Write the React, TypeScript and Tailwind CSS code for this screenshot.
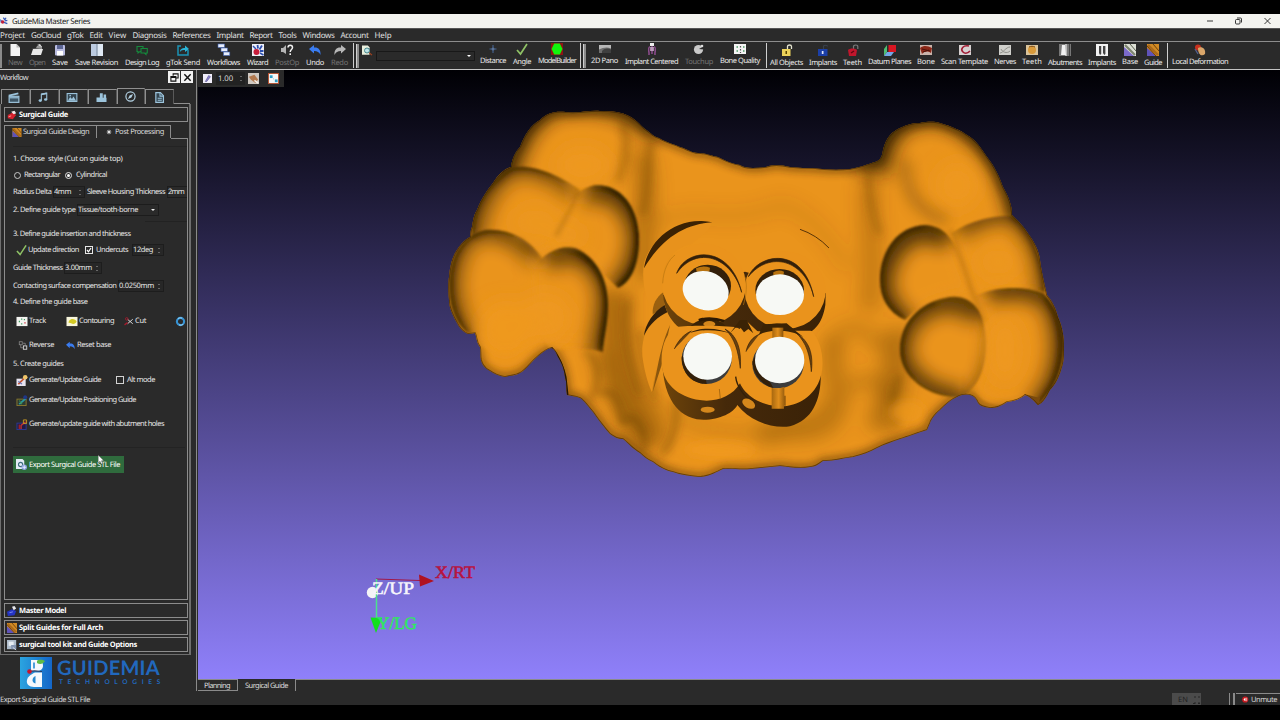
import { useLayoutEffect, useRef, useState, type ReactNode } from "react";

/* Single-line label whose tracking is adjusted so that it fills a given width. */
function Fit({ w, t, className = "" }: { w: number; t: string; className?: string }) {
  const ref = useRef<HTMLSpanElement>(null);
  const [ls, setLs] = useState(0);
  useLayoutEffect(() => {
    if (!ref.current) return;
    const natural = ref.current.getBoundingClientRect().width;
    setLs((w - natural) / t.length);
  }, [w, t]);
  return (
    <span ref={ref} style={{ letterSpacing: ls }} className={"inline-block shrink-0 whitespace-pre " + className}>
      {t}
    </span>
  );
}

/* ---------- small icons, all on a 12x12 grid ---------- */
const icons: Record<string, ReactNode> = {
  app: (<><path d="M5 1l2 3M9 1L7 5M11 5L7 6" stroke="#3458b8" strokeWidth="1.8" /><path d="M0 3l4 3-3 3z" fill="#4a6cc8" /><circle cx="4" cy="7.5" r="2.6" fill="#c0203a" /><path d="M6 8l5 2" stroke="#3458b8" strokeWidth="1.8" /></>),
  new: (<><path d="M1.5 0h6l3.500 3.500V12h-9.500z" fill="#f2f2f2" /><path d="M7.500 0v3.500H11z" fill="#b9b9b9" /></>),
  open: (<><path d="M0 4h5l1-2h5v3z" fill="#999" /><path d="M0 11L2 5h10l-2 6z" fill="#e9e9e9" /><path d="M6 1l3-1 2 3" fill="#ddd" /></>),
  save: (<><rect x="1" y="1" width="10" height="10.500" rx="1" fill="#b9bce0" /><rect x="3" y="1" width="6" height="4" fill="#5d6694" /><rect x="3" y="7" width="6" height="4.500" fill="#fff" /></>),
  rev: (<><rect x="0" y="0" width="12" height="12" fill="#dfe9f4" /><rect x="0" y="0" width="5.600" height="12" fill="#bccbe0" /><path d="M6 0v12" stroke="#51647f" strokeWidth=".8" /></>),
  log: (<><path d="M1 2.500h6v5H4l-2 1.500V7.500H1z" fill="none" stroke="#158a3c" strokeWidth="1.100" /><path d="M5 4.500h6.300v4.500H10v1.500L8.500 9H5z" fill="#26302a" stroke="#158a3c" strokeWidth="1.100" /></>),
  send: (<><path d="M4 2H1v9h10V6" fill="none" stroke="#1b93b5" strokeWidth="1.500" /><path d="M3 8c0-3 2-4 5-4V1.500L12 5 8 8V6C6 6 4 6 3 8z" fill="#2bb3d6" /></>),
  flow: (<><rect x="0" y="0" width="6.500" height="3.500" fill="#e8eefb" stroke="#3e62b4" strokeWidth=".6" /><rect x="3" y="4" width="6.500" height="3.500" fill="#e8eefb" stroke="#3e62b4" strokeWidth=".6" /><rect x="5.500" y="8" width="6.300" height="3.500" fill="#e8eefb" stroke="#3e62b4" strokeWidth=".6" /></>),
  wiz: (<><rect width="12" height="12" fill="#eef0f8" /><path d="M5.500 1l.5 3.500M10 1.500L7.500 5.500M11.500 7H8" stroke="#2d4fb0" strokeWidth="1.800" /><path d="M1 2l3 3" stroke="#2d4fb0" strokeWidth="1.500" /><circle cx="4.500" cy="8" r="3" fill="#c81e3c" /><path d="M8 9l3.500 2" stroke="#2d4fb0" strokeWidth="1.600" /></>),
  post: (<><path d="M0 4h2l3-3v9L2 8H0z" fill="#b5b5b5" /><path d="M7 3.500C7 .5 11.500.5 11.500 3.500c0 2-2.300 2-2.300 4.500" fill="none" stroke="#f0f0f0" strokeWidth="1.500" /><rect x="8.400" y="9.300" width="1.600" height="1.700" fill="#f0f0f0" /></>),
  undo: (<path d="M0 5l5-4v2.500c4-.5 7 2 6.500 7.500C10 8 8.500 7 5 7v2.500z" fill="#3a7cf0" />),
  redo: (<path d="M12 5L7 1v2.500C3 3 0 5.500.5 11 2 8 3.500 7 7 7v2.500z" fill="#b7b7b7" />),
  find: (<><path d="M0 0h7l2 2v9H0z" fill="#e8eedc" /><circle cx="6" cy="6" r="3" fill="#bfe3e6" stroke="#3a7f86" strokeWidth="1.100" /><path d="M8.500 8.500L12 11.500" stroke="#a5421f" strokeWidth="1.400" /></>),
  dist: (<><path d="M6 2v8M2.500 6h7" stroke="#3c5272" strokeWidth="1.600" /><circle cx="6" cy="6" r="1.500" fill="#5b7396" /></>),
  check: (<path d="M1 7l3.500 4L11 1" fill="none" stroke="#8fc266" strokeWidth="1.700" />),
  model: (<><rect width="12" height="12" fill="#8f1414" /><path d="M3.200 .6h5.600L11.500 6 8.800 11.400H3.200L.5 6z" fill="#12f50c" /></>),
  pano: (<><rect y="2" width="12" height="8" fill="#6e6e6e" /><path d="M0 2h12v3.500C8 3.500 4 4.500 0 6.500z" fill="#b9b9b9" /><path d="M3 8c3-3 6-3 9-1.500V10H3z" fill="#3f3f3f" /></>),
  impc: (<><path d="M4 0h4v3H4z" fill="#eee" /><path d="M3.500 3.500C1.500 6 3.500 8 3 12M8.500 3.500C10.500 6 8.500 8 9 12M6 3v8" fill="none" stroke="#b55ab5" strokeWidth="1.100" /><path d="M4 4h4v4H4z" fill="#d8b9d8" opacity=".7" /></>),
  touch: (<><circle cx="5.500" cy="6.500" r="4.600" fill="#c9c9c9" /><path d="M6 6l5-3v3.500z" fill="#2a2a2a" /><circle cx="9" cy="3" r="1.300" fill="#ddd" /></>),
  bq: (<><rect y="1" width="12" height="10" fill="#f4f4f4" /><path d="M2.500 4h1.500M2.500 8h1.500M9 4h1.500M9 8h1.500" stroke="#4c9a66" strokeWidth="1.300" /><path d="M6.500 3v1.500M6.500 6v1.500M6.500 9v1" stroke="#555" strokeWidth="1.200" /></>),
  lockY: (<><path d="M6.500 5V2.500C6.500.5 10.500.5 10.500 2.500V5" fill="none" stroke="#e4e4d0" strokeWidth="1.300" /><rect x="1" y="5" width="8.500" height="7" fill="#ecd25a" /><rect x="4.500" y="7" width="1.500" height="3" fill="#594400" /></>),
  lockB: (<><path d="M6.500 5V2.500C6.500.8 10.500.8 10.500 2.500" fill="none" stroke="#38404c" strokeWidth="1.200" /><rect x="1" y="5" width="9.500" height="7" fill="#1b3fa8" /><rect x="4.800" y="7" width="1.700" height="3" fill="#dfe6fa" /></>),
  lockR: (<><path d="M6.500 5V2.500C6.500.5 10.800.5 10.800 2.500V5" fill="none" stroke="#787878" strokeWidth="1.200" /><path d="M1 6c2-2 7-2 9 0l-1 6H2z" fill="#c0162c" /><path d="M4 9l3-2" stroke="#5f0612" strokeWidth="1.300" /></>),
  datum: (<><path d="M0 5l3-4v7l-3 4z" fill="#4fbf74" /><path d="M0 12l3-4h7l-3 4z" fill="#74a7e6" /><path d="M4.500 1H12v7H4.500z" fill="#d91622" /></>),
  bone: (<><rect y="1" width="12" height="10" fill="#c9b3aa" /><path d="M0 4c4-3 8-2 12 0l-1 5c-3-2-6-2-9 1z" fill="#8c2818" /><path d="M2 5l8 2M3 8l6-2" stroke="#4d120a" /></>),
  scan: (<><rect y="1" width="12" height="10" fill="#d6d0d0" /><path d="M10 2C4 1 1 5 4 8c2 2 5 1 7-1" fill="none" stroke="#a11c33" strokeWidth="1.600" /></>),
  nerve: (<><rect y="1" width="12" height="10" fill="#cfcfcb" /><path d="M1 9c3 0 6-6 10-6M2 5c1 3 6 5 9 2" fill="none" stroke="#8f8f8a" /></>),
  tooth: (<><rect y="1" width="12" height="10" fill="#d9c39b" /><circle cx="6" cy="6" r="4" fill="#d99a3a" /><path d="M3 3c2-1 4-1 6 0" stroke="#7c4b14" fill="none" /></>),
  abut: (<><rect width="12" height="12" fill="#777" /><rect x="6" width="2" height="12" fill="#b9b9b9" /><path d="M3 1h3l1 10H2z" fill="#f1f1f1" /><rect x="10" width="1" height="12" fill="#444" /></>),
  imps: (<><rect width="12" height="12" fill="#f2f2f2" /><path d="M3 2h2.200v8L4 11 3 9zM7 2h2.400v8L8.300 11 7 9z" fill="#444" /></>),
  base: (<><rect width="12" height="12" fill="#dcdfd4" /><path d="M0 3v9h10z" fill="#7b6ac9" /><path d="M1 1l10 10" stroke="#7d8470" strokeWidth="2.200" /><path d="M6 0l6 7" stroke="#59604d" strokeWidth="1" /></>),
  guide: (<><rect width="12" height="12" fill="#d08a24" /><path d="M0 4v8h9z" fill="#5f52b8" /><path d="M1 1l10 10" stroke="#a9681a" strokeWidth="2.400" /><path d="M6 0l6 7M0 2l9 10" stroke="#6b3d08" strokeWidth="1" /></>),
  local: (<><circle cx="4" cy="3.500" r="3" fill="#c8311e" /><path d="M4 4c4-2 8 1 7 6-3 3-7 1-7-6z" fill="#d9a66a" /><path d="M1 5l3 5" stroke="#54618f" strokeWidth="1.300" /></>),
  pen: (<><rect width="12" height="12" fill="#f1eefb" /><path d="M3 10l4.500-8 2.500 1.500L5 10z" fill="#8d83cf" stroke="#3b3a74" strokeWidth=".6" /></>),
  hand: (<><rect width="12" height="12" fill="#cfc8c1" /><path d="M1 4l6-2 4 5-3 4-5-4z" fill="#b37a4f" /><path d="M7 8l4 3" stroke="#f5efe9" strokeWidth="1.500" /></>),
  pts: (<><rect x=".5" y=".5" width="11" height="11" fill="#f6f6f6" stroke="#b7502e" /><rect x="2" y="2.500" width="3" height="3" fill="#2c9fc8" /><rect x="7.500" y="7" width="3" height="3" fill="#2c9fc8" /><path d="M5.500 6l1 .8" stroke="#8fc4d8" /></>),
  red: (<><path d="M1 6l6-3 4 3-4 5-6-1z" fill="#d5202c" /><path d="M5 2l4-1 2 3-3 1z" fill="#f2e6e6" /><path d="M2 8l3-1" stroke="#ffb3b3" /></>),
  blue: (<><path d="M0 7l6-3 5 2-2 5-8 1z" fill="#2434c4" /><path d="M6 1l3-1 2 3-3 2z" fill="#e8e8ee" /><path d="M3 8l4-1" stroke="#8f9bf2" /></>),
  kit: (<><rect width="11" height="11" fill="#aebccb" /><rect x="2" y="2" width="6" height="5" fill="#e6edf4" /><path d="M5 6h6v5H5z" fill="#8496b4" /><path d="M7 9l4 3" stroke="#e8edf4" /></>),
  flower: (<path d="M6 1.500v9M1.500 6h9M3 3l6 6M9 3L3 9" stroke="#ededed" strokeWidth="1.700" />),
  track: (<><rect y="1" width="12" height="10" fill="#f4f4f0" /><path d="M2.500 6h1.300M5 3.500h1.300M5 8.500h1.300M8 4h1.300" stroke="#3d9c60" strokeWidth="1.400" /><path d="M8.500 7.500h1.500" stroke="#c34" strokeWidth="1.300" /></>),
  cont: (<><rect y="1" width="12" height="10" fill="#f8f6dc" /><path d="M3 5c2-3 7-2 8 1-1 3-4 3-6 2L2 7z" fill="#d3c924" /></>),
  cut: (<><path d="M4 3l7 6M4 9l7-6" stroke="#d8d8d8" strokeWidth="1.300" /><circle cx="3" cy="2.500" r="1.700" fill="none" stroke="#a31a2c" strokeWidth="1.200" /><path d="M0 10.500l4-3" stroke="#a31a2c" strokeWidth="1.800" /></>),
  refresh: (<><circle cx="6" cy="6" r="4.800" fill="none" stroke="#3793d4" strokeWidth="2.800" /><path d="M2.500 2.500C4 1 6 .8 8 1.500M9.500 9.500C8 11 6 11.200 4 10.500" stroke="#9fd8f5" strokeWidth="1.300" /></>),
  reverse: (<><rect x="1" y="1" width="4" height="4" fill="none" stroke="#8c8c8c" /><rect x="6.500" y="6.500" width="4.500" height="4.500" fill="none" stroke="#d8d8d8" strokeWidth="1.200" /><path d="M3 5v4h3M6 3h3v3" fill="none" stroke="#a8a8a8" strokeWidth=".8" /></>),
  gen1: (<><rect y="4" width="10" height="8" fill="#e6e3ee" /><path d="M2 10l8-8" stroke="#c7522c" strokeWidth="1.800" /><circle cx="9.500" cy="2.500" r="2.500" fill="#f0c56a" /><path d="M2 7l4 3" stroke="#5569b9" strokeWidth="1.200" /></>),
  gen2: (<><rect x=".5" y="4.500" width="10" height="7" fill="#2d3c33" stroke="#8a7a2e" /><path d="M3 10l7-6" stroke="#2a9aa0" strokeWidth="2" /><circle cx="9.500" cy="2.500" r="2.200" fill="#1f3788" /><path d="M3 6l3 4" stroke="#3f8a4c" strokeWidth="1.200" /></>),
  gen3: (<><rect x=".5" y="4.500" width="10" height="7" fill="#221a44" stroke="#2d3a96" /><path d="M5 11V7l5-4" stroke="#c03030" strokeWidth="1.500" /><path d="M7.500 1H11v4H7.500z" fill="none" stroke="#c79a24" /><path d="M3 6v5" stroke="#b22" strokeWidth="1.200" /></>),
  exp: (<><path d="M0 0h7l2 2v9H0z" fill="#e4ebf6" /><circle cx="5" cy="6" r="2.300" fill="none" stroke="#3d6e7c" strokeWidth="1.200" /><circle cx="9" cy="9" r="3" fill="#8ca0dc" /><path d="M7 9h4M9 7v4" stroke="#e8eeff" /></>),
  mute: (<><circle cx="5.500" cy="6" r="5.300" fill="#c9191f" /><path d="M3 5l3-2v6L3 7z" fill="#fff" /><path d="M8 3v6" stroke="#fff" /></>),
  tabClap: (<><path d="M0 3l10.500-2.500.5 2L.5 5z" fill="#9cc4dc" /><rect x=".7" y="4.700" width="10.600" height="6.600" fill="#3d5565" stroke="#9cc4dc" strokeWidth="1.300" /><path d="M1 6.300h10" stroke="#9cc4dc" strokeWidth="1.300" /></>),
  tabMusic: (<><path d="M4 9.500V2l6.500-1.200V8" stroke="#9cc4dc" strokeWidth="1.300" /><path d="M4 2.300l6.500-1.200" stroke="#9cc4dc" strokeWidth="2" /><ellipse cx="2.700" cy="9.700" rx="2" ry="1.600" fill="#9cc4dc" /><ellipse cx="9.200" cy="8.400" rx="2" ry="1.600" fill="#9cc4dc" /></>),
  tabImage: (<><rect x=".7" y="1.700" width="10.600" height="8.600" stroke="#9cc4dc" strokeWidth="1.200" fill="#33444f" /><path d="M1.500 9.500l2.500-4 2 2 1.500-2.500 3 4.500z" fill="#9cc4dc" /><circle cx="4" cy="4" r=".9" fill="#9cc4dc" /></>),
  tabTool: (<path d="M0 6.500h4V1.500h3.500V7H8.500V3h3V7H12v5H0z" fill="#9cc4dc" />),
  tabComp: (<><circle cx="6" cy="6" r="5" stroke="#b4d2e4" strokeWidth="1.300" /><path d="M8.800 3.200L7 7 3.200 8.800 5 5z" fill="#b4d2e4" /></>),
  tabDoc: (<><path d="M2 .7h5l3.300 3.300v7.300H2z" stroke="#9cc4dc" strokeWidth="1.300" fill="#33444f" /><path d="M6.500.7V4.500h3.800M4 6.700h4.500M4 9h4.500" stroke="#9cc4dc" strokeWidth="1.100" /></>),
};

function Ic({ n, className }: { n: string; className: string }) {
  return (
    <svg viewBox="0 0 12 12" className={"block shrink-0 overflow-visible " + className} fill="none">
      {icons[n]}
    </svg>
  );
}

type ToolItem = { i: string; t: string; w: number; dim?: boolean; up?: boolean };

function Tool({ i, t, w, dim, up }: ToolItem) {
  return (
    <div className={"flex shrink-0 flex-col items-center " + (dim ? "text-[#747474]" : "text-[#ececec]")}>
      <Ic n={i} className="h-[12px] w-[12px]" />
      <Fit w={w} t={t} className={"h-[10px] leading-[10px] " + (up ? "mt-px" : "mt-[2px]")} />
    </div>
  );
}

const fileTools: ToolItem[] = [
  { i: "new", t: "New", w: 14, dim: true }, { i: "open", t: "Open", w: 16, dim: true }, { i: "save", t: "Save", w: 16 },
  { i: "rev", t: "Save Revision", w: 43 }, { i: "log", t: "Design Log", w: 34 }, { i: "send", t: "gTok Send", w: 34 },
  { i: "flow", t: "Workflows", w: 33 }, { i: "wiz", t: "Wizard", w: 21 }, { i: "post", t: "PostOp", w: 24, dim: true },
  { i: "undo", t: "Undo", w: 18 }, { i: "redo", t: "Redo", w: 17, dim: true },
];
const measureTools: ToolItem[] = [
  { i: "dist", t: "Distance", w: 26, up: true }, { i: "check", t: "Angle", w: 18 }, { i: "model", t: "ModelBuilder", w: 38, up: true },
];
const viewTools: ToolItem[] = [
  { i: "pano", t: "2D Pano", w: 27, up: true }, { i: "impc", t: "Implant Centered", w: 53 },
  { i: "touch", t: "Touchup", w: 28, dim: true }, { i: "bq", t: "Bone Quality", w: 40, up: true },
];
const objectTools: ToolItem[] = [
  { i: "lockY", t: "All Objects", w: 33 }, { i: "lockB", t: "Implants", w: 28 }, { i: "lockR", t: "Teeth", w: 19 },
  { i: "datum", t: "Datum Planes", w: 43, up: true }, { i: "bone", t: "Bone", w: 18, up: true }, { i: "scan", t: "Scan Template", w: 47, up: true },
  { i: "nerve", t: "Nerves", w: 22, up: true }, { i: "tooth", t: "Teeth", w: 20, up: true }, { i: "abut", t: "Abutments", w: 34 },
  { i: "imps", t: "Implants", w: 28 }, { i: "base", t: "Base", w: 16, up: true }, { i: "guide", t: "Guide", w: 18 },
];
const menus: [string, number][] = [
  ["Project", 25], ["GoCloud", 30], ["gTok", 16.5], ["Edit", 13], ["View", 18], ["Diagnosis", 34], ["References", 38],
  ["Implant", 27], ["Report", 23], ["Tools", 18], ["Windows", 32], ["Account", 28], ["Help", 17],
];

const Sep = () => <div className="h-[25px] w-px shrink-0 bg-[#cfcfcf]" />;
const Handle = () => <div className="h-[24px] w-[3px] shrink-0 border-l border-[#d0d0d0] bg-[#8b8b8b]" />;

function Spin() {
  return (
    <span className="flex w-[8px] flex-col items-center gap-[3px]">
      <span className="h-0 w-0 border-x-[1.5px] border-b-[1.5px] border-x-transparent border-b-[#aaa]" />
      <span className="h-0 w-0 border-x-[1.5px] border-t-[1.5px] border-x-transparent border-t-[#aaa]" />
    </span>
  );
}

function Field({ t, w, className }: { t: string; w: number; className: string }) {
  return (
    <span className={"flex h-[12px] shrink-0 items-center justify-between border border-[#1d1d1d] bg-[#272727] leading-[10px] " + className}>
      <Fit t={t} w={w} />
      <Spin />
    </span>
  );
}

function Row({ className, children }: { className: string; children: ReactNode }) {
  return <div className={"flex h-[12px] shrink-0 items-center leading-[12px] " + className}>{children}</div>;
}

function SectionBar({ i, t, w, className }: { i: string; t: string; w: number; className: string }) {
  return (
    <div className={"flex h-[15px] shrink-0 items-center border border-[#8c8c8c] pl-[2px] font-bold text-white " + className}>
      <Ic n={i} className="h-[10px] w-[10px]" />
      <Fit t={t} w={w} className="ml-[2px]" />
    </div>
  );
}

const tabBox = "flex items-center justify-center border-t border-l border-r border-[#8f8f8f] border-r-[#5a5a5a] ";

function Workflow() {
  return (
    <aside className="flex w-[196px] shrink-0 flex-col">
      <div className="flex h-[14px] items-center text-[#dcdcdc]">
        <Fit t="Workflow" w={28} className="mt-px" />
        <div className="mr-[3px] ml-auto flex gap-px">
          <span className="flex h-[12px] w-[12px] items-center justify-center bg-[#f2f2f2]">
            <svg viewBox="0 0 10 10" className="h-[9px] w-[9px]" fill="none" stroke="#111" strokeWidth="1.200"><path d="M3.500 3V1h5.500v4.500H7M1 4h5.500v5H1zM1 5h5.500" /></svg>
          </span>
          <span className="flex h-[12px] w-[12px] items-center justify-center bg-[#f2f2f2]">
            <svg viewBox="0 0 10 10" className="h-[9px] w-[9px]" fill="none" stroke="#111" strokeWidth="1.600"><path d="M1.500 1.500l7 7M8.500 1.500l-7 7" /></svg>
          </span>
        </div>
      </div>

      <div className="mt-[4px] flex h-[16px] items-end pl-px">
        <div className={tabBox + "h-[15px] w-[29px] pr-[3px]"}><Ic n="tabClap" className="h-[11px] w-[12px]" /></div>
        <div className={tabBox + "h-[15px] w-[29px] pr-[3px]"}><Ic n="tabMusic" className="h-[11px] w-[10px]" /></div>
        <div className={tabBox + "h-[15px] w-[29px] pr-[3px]"}><Ic n="tabImage" className="h-[11px] w-[12px]" /></div>
        <div className={tabBox + "h-[15px] w-[29px] pr-[3px]"}><Ic n="tabTool" className="h-[10px] w-[11px]" /></div>
        <div className={tabBox + "h-[16px] w-[28px] pr-[2px]"}><Ic n="tabComp" className="h-[11px] w-[11px]" /></div>
        <div className={tabBox + "h-[15px] w-[29px]"}><Ic n="tabDoc" className="h-[11px] w-[11px]" /></div>
        <div className="h-px w-[16px] self-end bg-[#8f8f8f]" />
      </div>

      <div className="flex h-[551px] w-[191px] shrink-0 flex-col border-r-2 border-b border-l border-[#6e6e6e] pt-[3px] pr-px pl-[3px]">
        <SectionBar i="red" t="Surgical Guide" w={49} className="" />
        <div className="mt-[3px] flex h-[14px] shrink-0 text-[#dadada]">
          <div className="flex h-[14px] w-[92px] items-center border-t border-l border-[#8c8c8c] pb-px pl-[7px]">
            <Ic n="guide" className="h-[9px] w-[10px]" />
            <Fit t="Surgical Guide Design" w={66} className="ml-px" />
          </div>
          <div className="flex h-[13px] w-[75px] items-center border-t border-r border-l border-[#8c8c8c] pl-[9px]">
            <Ic n="flower" className="h-[6px] w-[6px]" />
            <Fit t="Post Processing" w={49} className="ml-[3px]" />
          </div>
          <div className="h-px grow self-end bg-[#8c8c8c]" />
        </div>

        <div className="flex h-[461px] shrink-0 flex-col overflow-hidden border-r border-b border-l border-[#8c8c8c] pl-[8px] text-[#e8e8e8]">
          <div className="mt-[7px] h-px bg-[#232323]" />
          <Row className="mt-[6px]"><Fit t="1. Choose  style (Cut on guide top)" w={109.500} /></Row>
          <Row className="mt-[4px]">
            <span className="ml-px h-[7px] w-[7px] rounded-full border border-[#c9c9c9]" />
            <Fit t="Rectangular" w={36} className="ml-[3px]" />
            <span className="ml-[5px] flex h-[7px] w-[7px] items-center justify-center rounded-full border border-[#e0e0e0]"><span className="h-[3px] w-[3px] rounded-full bg-white" /></span>
            <Fit t="Cylindrical" w={31} className="ml-[4px]" />
          </Row>
          <Row className="mt-[5px]">
            <Fit t="Radius Delta" w={38.500} />
            <Field t="4mm" w={17} className="ml-[1.500px] w-[32px]" />
            <Fit t="Sleeve Housing Thickness" w={78} className="ml-[2px]" />
            <span className="ml-[2px] flex h-[12px] grow items-center border-y border-l border-[#1d1d1d] leading-[10px]"><Fit t="2mm" w={16} /></span>
          </Row>
          <Row className="mt-[6px]">
            <Fit t="2. Define guide type" w={62.500} />
            <span className="ml-[1.500px] flex h-[12px] w-[82px] items-center justify-between border border-[#1c1c1c] leading-[10px]">
              <Fit t="Tissue/tooth-borne" w={60} />
              <span className="mr-[3px] h-0 w-0 border-x-[2.500px] border-t-[2.500px] border-x-transparent border-t-[#ececec]" />
            </span>
          </Row>
          <div className="mt-[5px] ml-auto h-px w-[42px] bg-[#222]" />
          <Row className="mt-[6px]"><Fit t="3. Define guide insertion and thickness" w={117.500} /></Row>
          <Row className="mt-[4px]">
            <Ic n="check" className="ml-[3px] h-[12px] w-[11px]" />
            <Fit t="Update direction" w={51} className="ml-px" />
            <span className="ml-[6px] flex h-[8px] w-[8px] items-center justify-center border border-[#e6e6e6]">
              <svg viewBox="0 0 6 6" className="h-[6px] w-[6px]" fill="none" stroke="#fff" strokeWidth="1.200"><path d="M1 3l1.500 1.800L5 1" /></svg>
            </span>
            <Fit t="Undercuts" w={32} className="ml-[3px]" />
            <Field t="12deg" w={20} className="ml-[4px] w-[32px]" />
          </Row>
          <Row className="mt-[6px]">
            <Fit t="Guide Thickness" w={49.500} />
            <Field t="3.00mm" w={27} className="ml-[1.500px] w-[38px]" />
          </Row>
          <Row className="mt-[6px]">
            <Fit t="Contacting surface compensation" w={103.500} />
            <Field t="0.0250mm" w={35} className="ml-[1.500px] w-[46px]" />
          </Row>
          <Row className="mt-[4px]"><Fit t="4. Define the guide base" w={74.500} /></Row>
          <Row className="mt-[7px]">
            <Ic n="track" className="ml-[3px] h-[11px] w-[12px]" />
            <Fit t="Track" w={17} className="ml-px" />
            <Ic n="cont" className="ml-[20px] h-[11px] w-[12px]" />
            <Fit t="Contouring" w={35} className="ml-px" />
            <Ic n="cut" className="ml-[10px] h-[9px] w-[10px]" />
            <Fit t="Cut" w={11} className="ml-px" />
            <Ic n="refresh" className="ml-[30px] h-[9px] w-[9px]" />
          </Row>
          <Row className="mt-[12px]">
            <Ic n="reverse" className="ml-[5px] h-[9px] w-[10px]" />
            <Fit t="Reverse" w={25} className="ml-px" />
            <Ic n="undo" className="ml-[11px] h-[9px] w-[11px]" />
            <Fit t="Reset base" w={34} className="ml-px" />
          </Row>
          <Row className="mt-[7px]"><Fit t="5. Create guides" w={50.500} /></Row>
          <Row className="mt-[4px]">
            <Ic n="gen1" className="ml-[3px] h-[11px] w-[12px]" />
            <Fit t="Generate/Update Guide" w={72} className="ml-px" />
            <span className="ml-[15px] h-[8px] w-[8px] border border-[#d2d2d2]" />
            <Fit t="Alt mode" w={28} className="ml-[3px]" />
          </Row>
          <Row className="mt-[8px]">
            <Ic n="gen2" className="ml-[3px] h-[11px] w-[12px]" />
            <Fit t="Generate/Update Positioning Guide" w={107} className="ml-px" />
          </Row>
          <Row className="mt-[12px]">
            <Ic n="gen3" className="ml-[3px] h-[11px] w-[12px]" />
            <Fit t="Generate/update guide with abutment holes" w={135} className="ml-px" />
          </Row>
          <div className="mt-[17px] h-px w-[172px] shrink-0 bg-[#232323]" />
          <div className="relative mt-[8px] flex h-[17px] w-[111px] shrink-0 items-center bg-[#2f6b3d] pl-[3px] text-white">
            <Ic n="exp" className="h-[11px] w-[11px]" />
            <Fit t="Export Surgical Guide STL File" w={91} className="ml-[2px]" />
            <svg viewBox="0 0 8 12" className="absolute top-[-1px] left-[85px] h-[10px] w-[7px]"><path d="M0 0v9.500l2.200-2L4 11l1.500-.7L4 7h3z" fill="#fff" stroke="#333" strokeWidth=".5" /></svg>
          </div>
        </div>

        <SectionBar i="blue" t="Master Model" w={47} className="mt-[3px]" />
        <SectionBar i="guide" t="Split Guides for Full Arch" w={84} className="mt-[2px]" />
        <SectionBar i="kit" t="surgical tool kit and Guide Options" w={118} className="mt-[2px]" />
      </div>

      <div className="flex h-[35px] items-center pl-[20px]">
        <svg viewBox="0 0 32 32" className="h-[32px] w-[32px] shrink-0">
          <defs><linearGradient id="lg" x1="0" x2="1"><stop offset="0" stopColor="#2ba4e0" /><stop offset="1" stopColor="#1466c8" /></linearGradient></defs>
          <rect width="32" height="32" fill="url(#lg)" />
          <path d="M11 3h6c5 0 6 3 6 6s-3 5-6 5h-6z" fill="#f4f8fc" />
          <path d="M14 5.500v6" stroke="#2388d0" strokeWidth="1.600" />
          <path d="M22 15.500V30h-8c-5 0-8-3-7-7s5-6 8-7.500z" fill="#f4f8fc" />
          <path d="M15.500 19c-4 1.500-4 7 0 7.500z" fill="#2388d0" />
          <path d="M17 4c2-2 6-1 8 0-2 3-5 4-8 2z" fill="#5dbb46" />
          <path d="M9 15c3-2 8-1 13-.5" fill="none" stroke="#2a3b60" strokeWidth="1.200" />
          <circle cx="9.500" cy="14.500" r="2.300" fill="#c8142c" />
        </svg>
        <div className="ml-[5px] flex flex-col items-start text-[#2168bd]">
          <Fit t="GUIDEMIA" w={103} className="h-[20px] font-[Lato] text-[20px] leading-[20px] font-bold" />
          <Fit t="TECHNOLOGIES" w={106} className="ml-[2px] h-[9px] font-[Lato] text-[6.5px] leading-[9px] font-bold" />
        </div>
      </div>
    </aside>
  );
}

/* ---------- 3D model of the jaw ---------- */
const body =
  "M511 167C512 158 516 151 520 147C525 134 531 125 540 120C548 112 556 111 566 112C578 114 588 110 600 111C612 111 622 112 629 116C638 121 641 126 645 129C651 133 654 137 659 138C667 143 674 144 680 147C687 149 692 153 698 153C706 153 712 156 718 157C728 162 733 164 740 165C746 169 756 168 766 167C774 164 781 165 790 167C800 168 806 168 813 168C827 170 840 170 850 169C862 167 868 164 875 162C881 160 882 156 883 150C886 137 893 131 900 128C908 124 914 123 920 123C930 121 936 122 940 123C953 127 960 130 967 135C976 140 981 148 987 157C995 167 999 176 1003 187C1009 198 1012 205 1012 215C1020 223 1024 227 1027 232C1036 244 1039 252 1040 260C1042 275 1045 285 1047 295C1053 302 1056 309 1058 317C1063 328 1064 338 1064 347C1064 356 1064 361 1062 367C1059 378 1055 385 1050 390C1046 398 1043 403 1038 405C1034 401 1031 397 1025 395C1019 400 1013 401 1007 402C1000 407 995 408 990 408C984 407 980 406 978 403C976 398 974 396 970 395C965 394 960 395 957 397C950 400 945 405 940 410C934 415 931 420 930 423L927 430C917 433 910 436 900 439C892 442 885 444 877 448C870 452 862 455 853 457C843 458 835 461 823 461C819 464 815 467 810 467C799 469 790 467 780 466C770 467 760 468 750 469C740 470 731 468 723 469C716 472 711 476 700 477C690 476 681 475 673 472C664 470 658 466 653 462C648 460 644 457 640 453C633 449 629 444 623 439C618 439 614 437 610 434C604 427 599 421 593 412C589 408 585 401 580 398C575 396 571 396 567 395C566 389 567 383 565 377C564 368 561 362 558 357C556 352 554 348 551 348C546 349 542 353 537 357C531 362 526 370 520 373C515 376 511 375 505 377C499 376 494 374 490 371C484 368 482 364 481 360C480 355 481 351 480 347C476 342 477 337 475 333L468 334C463 332 459 327 457 323C452 314 449 307 449 300C448 290 448 283 449 277C450 266 452 259 455 253C459 246 464 240 470 237C471 234 470 231 472 227C473 220 474 214 477 210C481 199 488 189 493 183C498 175 504 169 511 167Z";

const lobes = {
  b: "M472 237C470 205 488 183 511 168C530 163 560 175 580 190C585 215 570 240 545 250C525 260 490 255 472 237Z",
  c: "M545 247C560 215 570 190 595 185C620 184 637 205 639 235C640 262 632 282 618 288C600 270 580 252 545 247Z",
  d: "M449 285C449 255 462 236 485 230C510 228 530 240 542 258C555 290 560 330 530 350C500 362 480 350 470 334C455 325 449 305 449 285Z",
  e: "M533 268C545 252 560 245 575 248C597 257 608 280 608 305C608 325 603 340 603 352C580 345 560 352 550 349C535 330 530 295 533 268Z",
  g: "M880 280C880 250 898 226 925 225C945 226 955 240 960 262C965 275 970 285 971 292C940 295 920 305 905 320C888 312 880 298 880 280Z",
  h: "M952 233C970 220 995 215 1012 216C1035 233 1043 262 1045 292C1020 288 995 290 975 298C968 275 960 255 952 233Z",
  i: "M900 350C900 322 920 303 945 298C970 292 985 310 987 340C988 365 978 390 960 397C925 398 900 375 900 350Z",
  j: "M975 296C995 286 1025 286 1043 293C1060 310 1065 330 1064 347C1062 378 1050 392 1038 405C1010 405 985 410 975 390C990 365 988 325 975 296Z",
};
type LobeKey = keyof typeof lobes;

const shades: { k: LobeKey; d: string; w: number; o: number; blur: string }[] = [
  { k: "b", d: "M464 250C468 203 484 176 511 160C540 158 562 168 584 188", w: 34, o: 0.6, blur: "url(#b8)" },
  { k: "b", d: "M472 232C474 205 488 183 511 168C530 165 550 172 566 182", w: 6, o: 0.5, blur: "url(#b2)" },
  { k: "c", d: "M578 188C604 176 634 190 645 228C648 258 638 284 616 296", w: 36, o: 0.72, blur: "url(#b8)" },
  { k: "c", d: "M590 185C620 184 637 205 639 235C640 262 632 278 618 288", w: 8, o: 0.9, blur: "url(#b2)" },
  { k: "d", d: "M466 344C436 315 436 250 470 226C500 218 528 232 544 256", w: 34, o: 0.6, blur: "url(#b8)" },
  { k: "d", d: "M468 334C449 315 444 262 466 240C480 229 500 228 515 234", w: 6, o: 0.5, blur: "url(#b2)" },
  { k: "e", d: "M540 258C562 234 604 244 615 290C616 320 609 335 607 358", w: 36, o: 0.72, blur: "url(#b8)" },
  { k: "e", d: "M558 247C595 250 608 280 608 305C608 322 603 335 603 350", w: 8, o: 0.85, blur: "url(#b2)" },
  { k: "g", d: "M954 236C925 208 880 230 874 280C873 304 888 322 905 332", w: 38, o: 0.78, blur: "url(#b8)" },
  { k: "g", d: "M925 225C898 226 880 250 880 280C880 298 888 310 903 320", w: 7, o: 0.55, blur: "url(#b2)" },
  { k: "h", d: "M953 227C970 212 995 207 1014 207C1044 230 1052 265 1053 300", w: 32, o: 0.6, blur: "url(#b8)" },
  { k: "h", d: "M1012 216C1035 233 1043 262 1046 292", w: 6, o: 0.5, blur: "url(#b2)" },
  { k: "i", d: "M986 312C962 280 896 292 892 350C893 380 925 406 964 406", w: 38, o: 0.7, blur: "url(#b8)" },
  { k: "i", d: "M935 301C910 310 900 330 900 350C900 362 904 372 910 380", w: 7, o: 0.5, blur: "url(#b2)" },
  { k: "i", d: "M982 302C998 325 996 365 970 401", w: 18, o: 0.36, blur: "url(#b6)" },
  { k: "j", d: "M986 287C1012 277 1039 282 1056 296C1076 330 1074 384 1040 414", w: 36, o: 0.72, blur: "url(#b8)" },
  { k: "j", d: "M1046 296C1066 328 1068 370 1040 405", w: 7, o: 0.55, blur: "url(#b2)" },
];

function Jaw() {
  return (
    <svg viewBox="198 70 1082 609" className="block h-[609px] w-[1082px]" fill="none">
      <defs>
        <clipPath id="bodyClip"><path d={body} /></clipPath>
        {Object.entries(lobes).map(([k, d]) => (
          <clipPath id={"lobe-" + k} key={k}><path d={d} /></clipPath>
        ))}
        <filter id="b2" x="-30%" y="-30%" width="160%" height="160%"><feGaussianBlur stdDeviation="2.500" /></filter>
        <filter id="b4" x="-40%" y="-40%" width="180%" height="180%"><feGaussianBlur stdDeviation="4" /></filter>
        <filter id="b6" x="-40%" y="-40%" width="180%" height="180%"><feGaussianBlur stdDeviation="6.500" /></filter>
        <filter id="b8" x="-60%" y="-60%" width="220%" height="220%"><feGaussianBlur stdDeviation="8.500" /></filter>
        <filter id="soft"><feGaussianBlur stdDeviation="1" /></filter>
        <linearGradient id="pin" x1="0" x2="1"><stop offset="0" stopColor="#a8680f" /><stop offset=".5" stopColor="#e08e1c" /><stop offset="1" stopColor="#8a540b" /></linearGradient>
        <linearGradient id="skirt" x1="0" x2="1"><stop offset="0" stopColor="#6e440a" /><stop offset=".4" stopColor="#45290a" /><stop offset="1" stopColor="#3a2207" /></linearGradient>
      </defs>

      <path d={body} fill="#ea941c" />
      <g clipPath="url(#bodyClip)">
        {/* palate relief */}
        <g filter="url(#b8)" stroke="#6f4308">
          <path d="M616 290C610 340 625 400 657 445" strokeWidth="32" opacity=".5" />
          <path d="M600 350C605 380 620 410 640 440" strokeWidth="16" opacity=".35" />
          <path d="M640 150C652 190 640 230 645 280" strokeWidth="20" opacity=".42" />
          <path d="M835 340C825 380 850 390 830 420C810 440 780 420 760 440" strokeWidth="22" opacity=".34" />
          <path d="M895 330C900 370 890 400 880 430" strokeWidth="28" opacity=".42" />
          <path d="M870 180C866 230 878 260 868 310" strokeWidth="20" opacity=".3" />
          <path d="M650 225C700 200 720 230 780 205C810 210 830 240 850 270" strokeWidth="12" opacity=".14" />
          <path d="M830 345C850 315 870 330 880 350" strokeWidth="14" opacity=".26" />
          <path d="M850 390C870 370 880 380 900 410" strokeWidth="14" opacity=".28" />
          <path d="M655 400C690 440 800 445 830 400" strokeWidth="12" opacity=".2" />
        </g>
        <g filter="url(#b4)">
          <path d="M600 395C612 385 620 400 622 425M622 425C634 405 645 430 645 450M662 455C674 440 678 420 676 400M585 350C598 360 602 380 590 400" stroke="#5c3807" strokeWidth="5" opacity=".5" />
          <path d="M628 300C622 340 632 370 640 395M640 330C645 360 650 380 655 400" stroke="#5c3807" strokeWidth="5" opacity=".42" />
          <path d="M652 140C646 160 650 190 642 215M622 122C630 140 625 165 617 182" stroke="#6b4208" strokeWidth="8" opacity=".38" />
          <path d="M868 170C868 195 872 215 880 235" stroke="#6b4208" strokeWidth="6" opacity=".4" />
          <path d="M900 375C893 395 890 410 898 425" stroke="#6b4208" strokeWidth="6" opacity=".5" />
          <ellipse cx="720" cy="450" rx="35" ry="9" fill="#f39c20" opacity=".6" />
          <ellipse cx="908" cy="412" rx="18" ry="12" fill="#ee981e" opacity=".7" />
        </g>
        <path d="M906 160C903 192 918 212 948 220" stroke="#6b4208" strokeWidth="12" opacity=".38" filter="url(#b6)" />
        {/* outline falloff */}
        <path d={body} stroke="#3a2404" strokeWidth="5" opacity=".75" filter="url(#b4)" />
        <path d="M500 190C512 132 536 99 570 99C600 97 632 100 660 130" stroke="#2c1a02" strokeWidth="30" opacity=".72" filter="url(#b8)" />
        <path d="M873 172C878 122 903 107 937 108C984 117 1016 165 1026 222" stroke="#2c1a02" strokeWidth="34" opacity=".78" filter="url(#b8)" />
        {(["b", "c", "d", "e", "g", "h", "i", "j"] as LobeKey[]).map((k) => (
          <g key={k} filter="url(#soft)">
            <g clipPath={`url(#lobe-${k})`}>
              <path d={lobes[k]} fill="#ea941c" filter="url(#b6)" />
              {shades.filter((s) => s.k === k).map((s, n) => (
                <path key={n} d={s.d} stroke="#2c1a02" strokeWidth={s.w} opacity={s.o} filter={s.blur} />
              ))}
            </g>
          </g>
        ))}
        {/* lit saddles where neighbouring crowns merge */}
        <g filter="url(#b8)" fill="#ef991e">
          <ellipse cx="583" cy="165" rx="28" ry="20" opacity=".85" />
          <ellipse cx="578" cy="196" rx="9" ry="9" opacity=".7" />
          <ellipse cx="535" cy="222" rx="24" ry="18" opacity=".6" />
          <ellipse cx="565" cy="235" rx="20" ry="14" opacity=".6" />
          <ellipse cx="538" cy="262" rx="9" ry="9" opacity=".6" />
          <ellipse cx="505" cy="330" rx="27" ry="30" opacity=".95" />
          <ellipse cx="545" cy="318" rx="28" ry="26" opacity=".8" />
          <ellipse cx="957" cy="185" rx="22" ry="24" opacity=".85" />
          <ellipse cx="955" cy="232" rx="8" ry="7" opacity=".4" />
          <ellipse cx="1005" cy="350" rx="18" ry="34" opacity=".8" />
          <ellipse cx="998" cy="262" rx="22" ry="18" opacity=".6" />
        </g>
        <g stroke="#6b4208" filter="url(#b2)" opacity=".35" strokeWidth="3">
          <path d="M578 190L571 208L556 236" /><path d="M520 240L540 260" /><path d="M950 230L962 262L975 300L984 322" />
        </g>
        <path d="M551 348C558 356 563 368 565 377L567 395" stroke="#241502" strokeWidth="3" />
        <path d="M1024 394L1040 398L1038 407Z" fill="#7a4a0c" />
        <path d={body} stroke="#2f1d04" strokeWidth="1.600" opacity=".6" />
      </g>

      {/* sleeve housings, drawn at three times their size */}
      <g transform="translate(630 205) scale(.33333)">
        <path d="M68 325C50 290 33 230 42 175C60 105 140 42 245 52C240 80 210 95 185 118C130 130 100 165 97 235L100 265C80 280 70 300 68 325Z" fill="#e8921c" />
        <path d="M42 190C55 105 140 30 247 52C165 56 95 100 42 190Z" fill="#3b2204" />
        <path d="M100 262C80 275 66 300 68 328L104 306Z" fill="#9a6010" />
        <path d="M104 300C60 335 30 400 38 460C45 510 58 545 66 562C75 500 92 420 125 355Z" fill="#e8921c" />
        <path d="M104 300C70 320 46 358 42 392C60 355 85 335 112 322Z" fill="#33200a" />
        <path d="M120 360C92 420 80 500 68 562L95 480Z" fill="#8a560e" />
        <path d="M510 73Q560 90 597 129" stroke="#3b2204" strokeWidth="2.500" />

        <path d="M99 270C105 340 150 385 200 388L320 380L352 350L400 395L500 395C550 390 578 355 586 300L587 265L345 200Z" fill="url(#skirt)" />
        <ellipse cx="465" cy="256" rx="122" ry="116" fill="#ea931c" transform="rotate(8 465 256)" />
        <ellipse cx="222" cy="238" rx="126" ry="122" fill="#ea931c" transform="rotate(18 222 238)" />
        <path d="M98 235C100 195 115 165 135 150M345 215C352 235 350 270 340 300" stroke="#b8740f" strokeWidth="2" />
        <path d="M170 385C190 330 270 325 300 380Z" fill="#3b2305" />
        <path d="M385 385C410 345 475 345 510 392Z" fill="#3b2305" />
        <path d="M205 342Q240 330 285 345L280 352Q240 340 208 350Z" fill="#2c1903" />
        <ellipse cx="238" cy="357" rx="18" ry="9" fill="#d4871c" />

        <path d="M97 450C95 540 120 625 200 643C260 650 310 625 322 600C360 650 430 672 480 664C550 645 575 580 572 500L330 400Z" fill="url(#skirt)" />
        <path d="M95 475C92 420 112 380 140 366C170 362 280 360 322 368L340 378C390 380 545 375 545 378C575 410 585 470 572 515C555 575 500 605 450 604C390 602 345 570 330 535C310 570 270 587 230 587C160 585 98 545 95 475Z" fill="#ea931c" />
        <path d="M180 384C205 366 265 366 310 388C265 372 215 372 180 384Z" fill="#3b2305" />
        <path d="M386 390C420 370 480 372 520 396L500 380L470 355L400 358Z" fill="#3b2305" />
        <path d="M300 385L316 368L330 366L342 382L355 372L370 385L350 345L330 345Z" fill="#3b2305" />

        <path d="M140 205C165 130 300 115 335 262C305 155 200 120 140 205Z" fill="#33200a" stroke="#33200a" strokeWidth="2" />
        <path d="M355 215C385 145 520 120 551 275C525 165 420 135 355 215Z" fill="#33200a" stroke="#33200a" strokeWidth="2" />
        <path d="M133 432C145 405 165 385 185 378M285 372C320 390 335 430 331 490C325 440 315 400 285 372Z" stroke="#33200a" strokeWidth="2" fill="#33200a" fillOpacity=".7" />
        <path d="M348 440C355 410 370 395 388 388M500 385C540 410 550 450 544 500C540 450 530 415 500 385Z" stroke="#33200a" strokeWidth="2" fill="#33200a" fillOpacity=".7" />
        <path d="M317 515C320 545 345 580 375 595" stroke="#33200a" strokeWidth="4" />

        <ellipse cx="233" cy="243" rx="70" ry="64" fill="#33200a" />
        <ellipse cx="449" cy="255" rx="73" ry="63" fill="#33200a" />
        <path d="M198 190Q220 180 240 188L238 200H200Z" fill="#b8730f" />
        <path d="M430 202Q445 192 462 200L460 212H430Z" fill="#b8730f" />
        <ellipse cx="227" cy="257" rx="70" ry="58" fill="#f7f9f5" transform="rotate(18 227 257)" />
        <ellipse cx="450" cy="269" rx="72" ry="61" fill="#f7f9f5" />
        <path d="M427 368h33v35h-33z" fill="url(#pin)" />
        <ellipse cx="230" cy="462" rx="75" ry="75" fill="#3c3c3c" />
        <path d="M155 455C155 510 190 537 230 537L228 524C190 520 165 490 160 450Z" fill="#33200a" />
        <ellipse cx="233" cy="454" rx="73" ry="70" fill="#f7f9f5" />
        <ellipse cx="444" cy="477" rx="77" ry="73" fill="#3c3c3c" />
        <path d="M367 470C370 510 395 540 430 549L420 530C395 520 377 490 377 450Z" fill="#33200a" />
        <ellipse cx="449" cy="465" rx="74" ry="70" fill="#f7f9f5" />
        <path d="M425 548Q443 553 463 545V572H467V602H462V611H425Z" fill="url(#pin)" />
        <ellipse cx="233" cy="614" rx="21" ry="9" fill="#d4871c" />
        <ellipse cx="356" cy="596" rx="21" ry="13" fill="#d4871c" transform="rotate(30 356 596)" />
        <path d="M268 552L271 582" stroke="#8a540b" strokeWidth="2" />
      </g>

      {/* orientation axes */}
      <path d="M376 579L420 580.500" stroke="#a01848" strokeWidth="1" />
      <path d="M419 574.500L434 581L420 586.500Z" fill="#b01220" />
      <circle cx="372.500" cy="592.500" r="5.700" fill="#f4f4f6" />
      <path d="M376.500 579V620" stroke="#4ce08c" strokeWidth="1.500" />
      <path d="M370.500 617.500L382 618L376 633Z" fill="#12e01c" />
      <g fontFamily="'Liberation Serif', serif" fontSize="17.500" strokeWidth=".55">
        <text x="435" y="578" textLength="40" lengthAdjust="spacingAndGlyphs" fill="#b8123e" stroke="#b8123e">X/RT</text>
        <text x="372" y="594" textLength="42" lengthAdjust="spacingAndGlyphs" fill="#f6f4fc" stroke="#f6f4fc">Z/UP</text>
        <text x="377" y="629" textLength="40" lengthAdjust="spacingAndGlyphs" fill="#2fe660" stroke="#2fe660">Y/LG</text>
      </g>
    </svg>
  );
}

export default function App() {
  return (
    <div className="flex h-[720px] w-[1280px] flex-col overflow-hidden bg-black font-['Noto_Sans','Open_Sans',sans-serif] text-[7.5px] leading-[10px] [text-rendering:geometricPrecision]">
      <header className="mt-[14px] flex h-[14px] shrink-0 items-center bg-[#f3f3ef] text-[#222]">
        <Ic n="app" className="h-[8px] w-[8px]" />
        <Fit t="GuideMia Master Series" w={78} className="ml-[4px] pt-px text-[7.8px]" />
        <svg viewBox="0 0 66 10" className="mr-[8px] ml-auto h-[10px] w-[66px]" fill="none" stroke="#222" strokeWidth=".9">
          <path d="M1 5h6M58.500 2l6 6M64.500 2l-6 6" />
          <rect x="29.500" y="3.500" width="4.500" height="4.500" rx="1" /><path d="M31 2h3.500q1 0 1 1v3.500" />
        </svg>
      </header>

      <nav className="flex h-[13px] shrink-0 items-center gap-[6px] border-t border-[#555] bg-[#2a2a2a] pt-[2px] text-[8px] text-[#e0e0e0]">
        {menus.map(([t, w]) => <Fit key={t} t={t} w={w} />)}
      </nav>

      <div className="flex h-[29px] shrink-0 items-center border-t border-b border-t-[#8d8d8d] border-b-[#c4c4c4] bg-[#2a2a2a]">
        <div className="h-[24px] w-[2px] bg-[#8b8b8b]" />
        <div className="ml-[6px] flex h-[26px] w-[345px] shrink-0 items-start gap-[7px] pt-px">
          {fileTools.map((x) => <Tool key={x.t} {...x} />)}
        </div>
        <Sep />
        <div className="w-[2px]" />
        <Handle />
        <Ic n="find" className="mb-[10px] ml-[3px] h-[11px] w-[10px]" />
        <div className="ml-[4px] flex h-[10px] w-[99px] items-center justify-end border border-[#181818] pr-[3px]">
          <span className="h-0 w-0 border-x-[2.500px] border-t-[2.500px] border-x-transparent border-t-white" />
        </div>
        <div className="ml-[5px] flex h-[26px] w-[100px] shrink-0 items-start gap-[7px]">
          {measureTools.map((x) => <Tool key={x.i} {...x} />)}
        </div>
        <Sep />
        <div className="w-[2px]" />
        <Handle />
        <div className="ml-[5px] flex h-[26px] w-[175px] shrink-0 items-start gap-[7px]">
          {viewTools.map((x) => <Tool key={x.i} {...x} />)}
        </div>
        <Sep />
        <div className="ml-[3px] flex h-[26px] w-[397px] shrink-0 items-start gap-[6px] pt-px">
          {objectTools.map((x) => <Tool key={x.i} {...x} />)}
        </div>
        <Sep />
        <div className="ml-[4px] flex h-[26px] items-start pt-px">
          <Tool i="local" t="Local Deformation" w={56} up />
        </div>
      </div>

      <main className="flex h-[621px] shrink-0 bg-[#2a2a2a]">
        <Workflow />
        <section className="flex w-[1084px] flex-col border-l border-[#8a8a8a] pl-px">
          <div className="relative h-[609px] overflow-hidden bg-[linear-gradient(to_bottom,#000004,#8f80fa)]">
            <Jaw />
            <div className="absolute top-0 left-0 flex h-[17px] w-[86px] items-center bg-[#2a2a2a] text-[#d8d8d8]">
              <Ic n="pen" className="ml-[5px] h-[11px] w-[9px]" />
              <span className="ml-[4px] flex h-[13px] w-[29px] items-center justify-between bg-[#222] pl-[2px]"><Fit t="1.00" w={15} className="pt-px text-[7.8px]" /><Spin /></span>
              <Ic n="hand" className="ml-[3px] h-[11px] w-[11px]" />
              <Ic n="pts" className="ml-[9px] h-[11px] w-[11px]" />
            </div>
          </div>
          <div className="flex h-[12px] border-t border-[#8a8a8a] text-[#dcdcdc]">
            <div className="flex h-[11px] w-[40px] items-center justify-center border-r border-b border-[#8a8a8a] pt-px pr-px"><Fit t="Planning" w={26} /></div>
            <div className="-mt-px flex h-[13px] w-[58px] items-center justify-center border-r border-b border-[#8a8a8a] bg-[#2a2a2a] pt-px"><Fit t="Surgical Guide" w={43} /></div>
          </div>
        </section>
      </main>

      <footer className="flex h-[14px] shrink-0 items-center bg-[#2a2a2a] text-[#d8d8d8]">
        <Fit t="Export Surgical Guide STL File" w={90} className="mt-[3px]" />
        <div className="ml-auto flex h-[12px] w-[29px] items-center self-end bg-[#4b4b4b] pt-px pl-[6px] text-[#1f1f1f]">
          <Fit t="EN" w={10} />
          <svg viewBox="0 0 8 10" className="ml-[5px] h-[10px] w-[8px]" fill="none" stroke="#262626" strokeWidth="1"><path d="M1 2h2M5 2h2M0 8.500h2M2 7v2M6 7v2M5 8.500h2" /></svg>
        </div>
        <div className="ml-[28px] h-[12px] w-[6px] self-end border-r-2 border-l border-[#8a8a8a]" />
        <div className="ml-px flex h-[12px] w-[44px] items-center self-end border-t border-[#8a8a8a] pl-[6px]">
          <Ic n="mute" className="h-[7px] w-[7px]" />
          <Fit t="Unmute" w={26} className="ml-[2px]" />
        </div>
      </footer>
    </div>
  );
}
